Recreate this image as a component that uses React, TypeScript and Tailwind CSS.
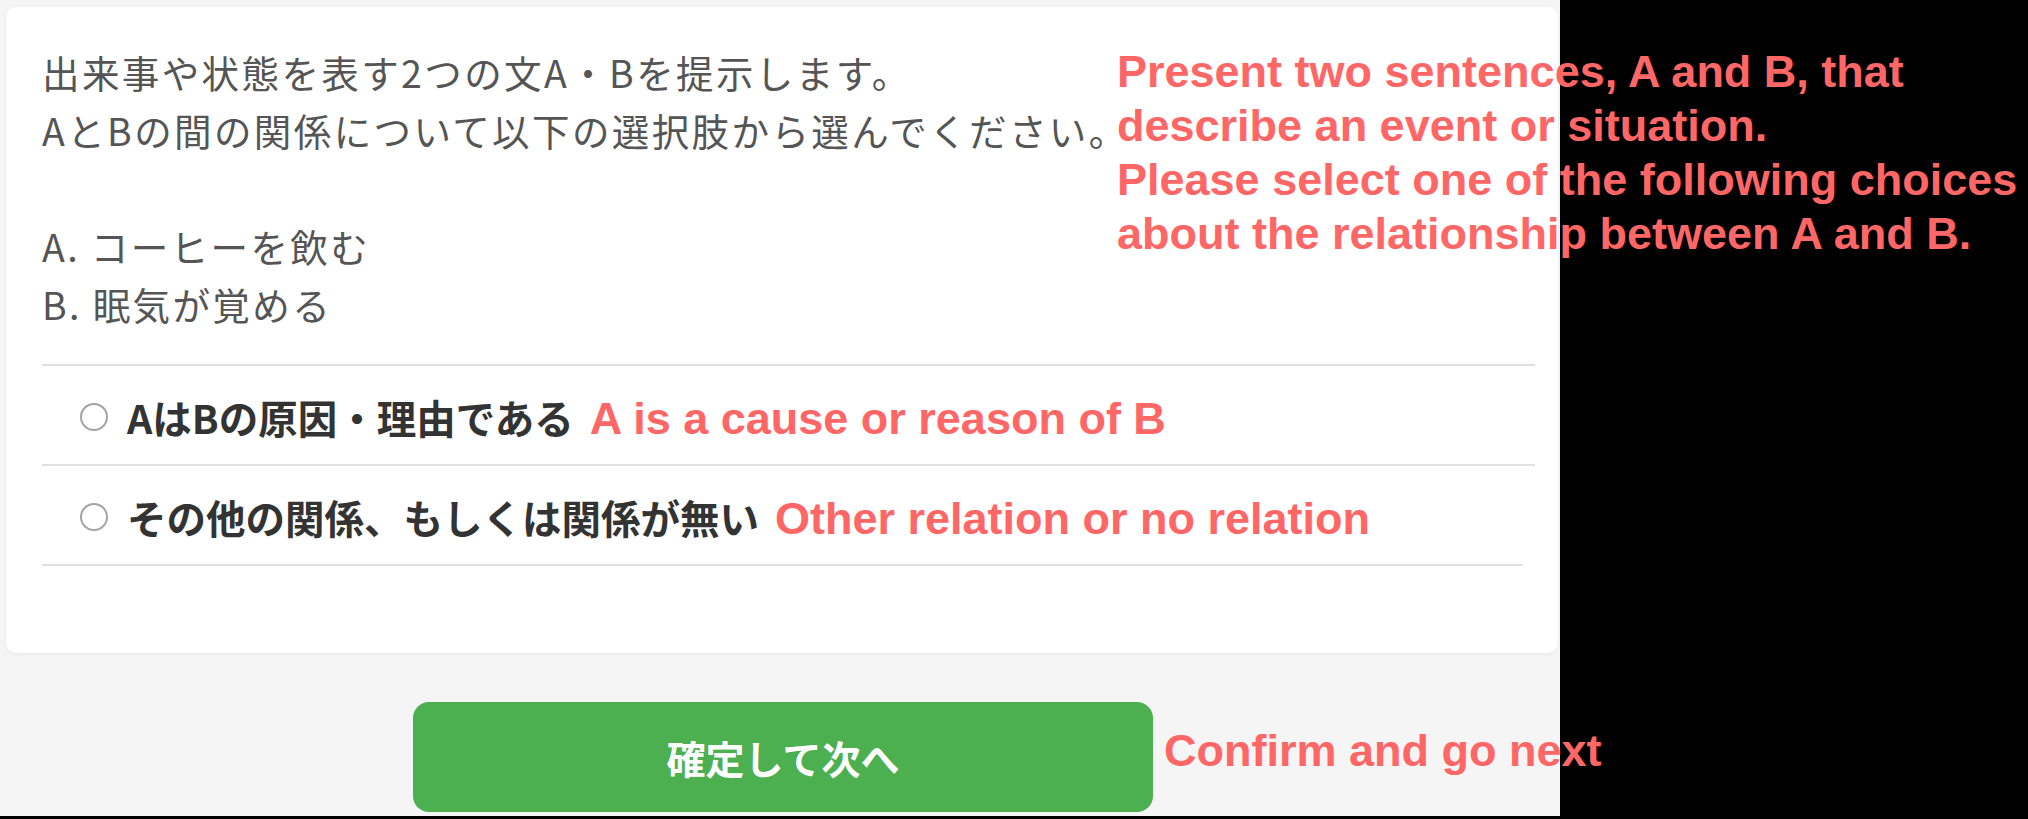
const jp = "font-['Noto_Sans_CJK_JP',sans-serif]";
const en = "font-['Liberation_Sans',Arial,sans-serif] font-bold text-[#ff6666] text-[45px] leading-[54px] tracking-normal whitespace-nowrap";

const OPTIONS = [
  { label: "AはBの原因・理由である", note: "A is a cause or reason of B" },
  { label: "その他の関係、もしくは関係が無い", note: "Other relation or no relation" },
];

function Radio() {
  return <span className="shrink-0 w-[28px] h-[28px] rounded-full border-2 border-[#a3a3a3] bg-white" />;
}

export default function App() {
  return (
    <div className="relative w-[2028px] h-[819px] bg-black overflow-hidden">
      <div className="w-[1560px] h-[816px] bg-[#f5f5f5] pt-[7px] pl-[6px]">
        {/* question card */}
        <div className="w-[1552px] h-[646px] bg-white rounded-[10px] shadow-[0_1px_4px_rgba(0,0,0,0.06)] pt-[36px] pl-[36px] pr-[23px]">
          <div className={`${jp} text-[37.5px] leading-[58px] tracking-[2.4px] text-[#555]`}>
            <p>出来事や状態を表す2つの文A・Bを提示します。</p>
            <p>AとBの間の関係について以下の選択肢から選んでください。</p>
            <p className="h-[58px]" />
            <p>A. コーヒーを飲む</p>
            <p>B. 眠気が覚める</p>
          </div>

          <div className="mt-[31px]">
            {OPTIONS.map((o) => (
              <div key={o.label} className="h-[100px] border-t-2 border-[#e0e0e0] flex items-center pl-[38px] pt-[4px]">
                <Radio />
                <span className={`${jp} ml-[19px] text-[39.5px] font-bold text-[#333] whitespace-nowrap`}>
                  {o.label}
                  <span className={`${en} ml-[16px]`}>{o.note}</span>
                </span>
              </div>
            ))}
            <div className="h-[2px] w-[calc(100%-12px)] bg-[#e0e0e0]" />
          </div>
        </div>

        {/* confirm button */}
        <div className="relative w-[740px] mx-auto mt-[49px]">
          <button className={`${jp} w-full h-[110px] rounded-[16px] bg-[#4caf50] text-white text-[39px] font-bold`}>
            確定して次へ
          </button>
          <span className={`${en} absolute left-[calc(100%+11px)] top-[22px]`}>Confirm and go next</span>
        </div>
      </div>

      {/* translation note */}
      <div className={`${en} absolute left-[1117px] top-[45px]`}>
        Present two sentences, A and B, that<br />
        describe an event or situation.<br />
        Please select one of the following choices<br />
        about the relationship between A and B.
      </div>
    </div>
  );
}
